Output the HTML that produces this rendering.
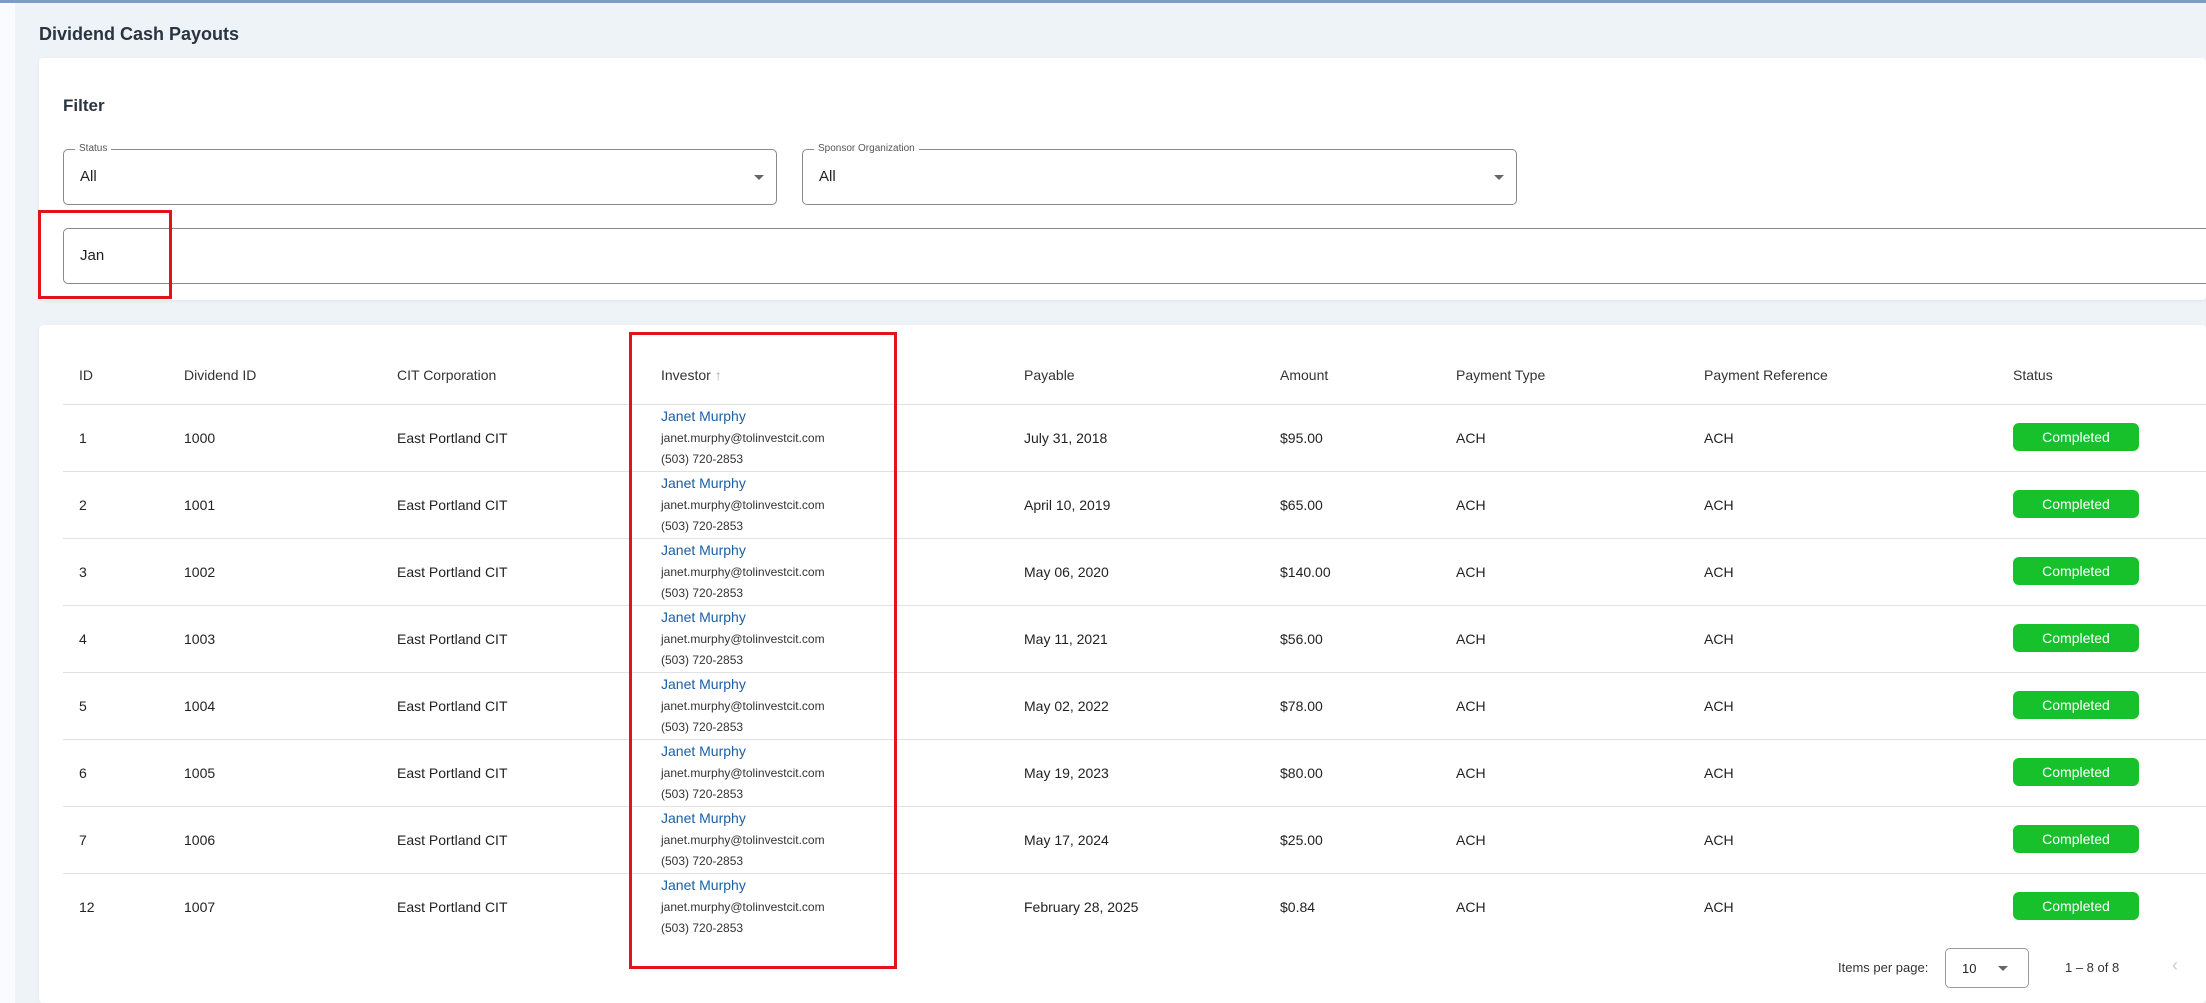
<!DOCTYPE html>
<html style="overflow:hidden;height:1003px"><head><meta charset="utf-8"><style>
*{box-sizing:border-box;margin:0;padding:0}
body{width:2206px;height:1003px;overflow:hidden;background:#eef3f7;font-family:"Liberation Sans",sans-serif;color:#222;position:relative}
.abs{position:absolute}
.topline{left:0;top:0;width:2206px;height:3px;background:#7a9cc6}
.leftstrip{left:0;top:3px;width:15px;height:1000px;background:#fafbfc}
.card{background:#fff;border-radius:4px;box-shadow:0 1px 3px rgba(0,0,0,.06)}
.field{border:1px solid #8a8a8a;border-radius:5px;background:#fff}
.lbl{font-size:10px;color:#555;background:#fff;padding:0 4px;top:-7px;left:11px}
.val{font-size:15px;left:16px;top:18px;color:#222}
.arrow{width:0;height:0;border-left:5px solid transparent;border-right:5px solid transparent;border-top:5px solid #666}
.t{font-size:14px;color:#222;white-space:nowrap}
.h{font-size:14px;color:#333}
.line{height:1px;background:#e2e2e2;left:63px;width:2143px}
.badge{width:126px;height:28px;border-radius:6px;background:#16c12c;color:#fff;font-size:14px;text-align:center;line-height:28px}
.nm{font-size:14px;color:#1a5fa8}
.em{font-size:12px;color:#333}
.red{border:3px solid #e0141a}
</style></head><body>
<div class="abs topline"></div>
<div class="abs leftstrip"></div>
<div class="abs" style="left:39px;top:24px;font-size:18px;font-weight:bold;color:#2a3440">Dividend Cash Payouts</div>

<div class="abs card" style="left:39px;top:58px;width:2167px;height:242px"></div>
<div class="abs" style="left:63px;top:96px;font-size:17px;font-weight:bold;color:#2a3440">Filter</div>
<div class="abs field" style="left:63px;top:149px;width:714px;height:56px">
 <div class="abs lbl">Status</div><div class="abs val">All</div>
 <div class="abs arrow" style="right:12px;top:25px"></div></div>
<div class="abs field" style="left:802px;top:149px;width:715px;height:56px">
 <div class="abs lbl">Sponsor Organization</div><div class="abs val">All</div>
 <div class="abs arrow" style="right:12px;top:25px"></div></div>
<div class="abs field" style="left:63px;top:228px;width:2150px;height:56px">
 <div class="abs val" style="top:18px">Jan</div></div>
<div class="abs red" style="left:38px;top:210px;width:134px;height:89px"></div>

<div class="abs card" style="left:39px;top:325px;width:2167px;height:678px"></div>
<div class="abs h" style="left:79px;top:367px">ID</div>
<div class="abs h" style="left:184px;top:367px">Dividend ID</div>
<div class="abs h" style="left:397px;top:367px">CIT Corporation</div>
<div class="abs h" style="left:661px;top:367px">Investor <span style="color:#aaa">↑</span></div>
<div class="abs h" style="left:1024px;top:367px">Payable</div>
<div class="abs h" style="left:1280px;top:367px">Amount</div>
<div class="abs h" style="left:1456px;top:367px">Payment Type</div>
<div class="abs h" style="left:1704px;top:367px">Payment Reference</div>
<div class="abs h" style="left:2013px;top:367px">Status</div>
<div class="abs line" style="top:404px"></div>

<div id="rows"></div>
<script>
var d=[["1","1000","July 31, 2018","$95.00"],["2","1001","April 10, 2019","$65.00"],["3","1002","May 06, 2020","$140.00"],["4","1003","May 11, 2021","$56.00"],["5","1004","May 02, 2022","$78.00"],["6","1005","May 19, 2023","$80.00"],["7","1006","May 17, 2024","$25.00"],["12","1007","February 28, 2025","$0.84"]];
var h="";
d.forEach(function(r,i){var y=404+i*67;var c=y+26;
h+='<div class="abs t" style="left:79px;top:'+c+'px">'+r[0]+'</div>';
h+='<div class="abs t" style="left:184px;top:'+c+'px">'+r[1]+'</div>';
h+='<div class="abs t" style="left:397px;top:'+c+'px">East Portland CIT</div>';
h+='<div class="abs nm" style="left:661px;top:'+(y+4)+'px">Janet Murphy</div>';
h+='<div class="abs em" style="left:661px;top:'+(y+27)+'px">janet.murphy@tolinvestcit.com</div>';
h+='<div class="abs em" style="left:661px;top:'+(y+48)+'px">(503) 720-2853</div>';
h+='<div class="abs t" style="left:1024px;top:'+c+'px">'+r[2]+'</div>';
h+='<div class="abs t" style="left:1280px;top:'+c+'px">'+r[3]+'</div>';
h+='<div class="abs t" style="left:1456px;top:'+c+'px">ACH</div>';
h+='<div class="abs t" style="left:1704px;top:'+c+'px">ACH</div>';
h+='<div class="abs badge" style="left:2013px;top:'+(y+19)+'px">Completed</div>';
if(i<7)h+='<div class="abs line" style="top:'+(y+67)+'px"></div>';});
document.getElementById("rows").innerHTML=h;
</script>
<div class="abs red" style="left:629px;top:332px;width:268px;height:637px"></div>

<div class="abs" style="left:1838px;top:960px;font-size:13px;color:#333">Items per page:</div>
<div class="abs field" style="left:1945px;top:948px;width:84px;height:40px;border-color:#999">
 <div class="abs" style="left:16px;top:12px;font-size:13px">10</div>
 <div class="abs arrow" style="right:20px;top:17px"></div></div>
<div class="abs" style="left:2065px;top:960px;font-size:13px;color:#333">1 – 8 of 8</div>
<div class="abs" style="left:2172px;top:955px;font-size:18px;color:#ccc">‹</div>
</body></html>
